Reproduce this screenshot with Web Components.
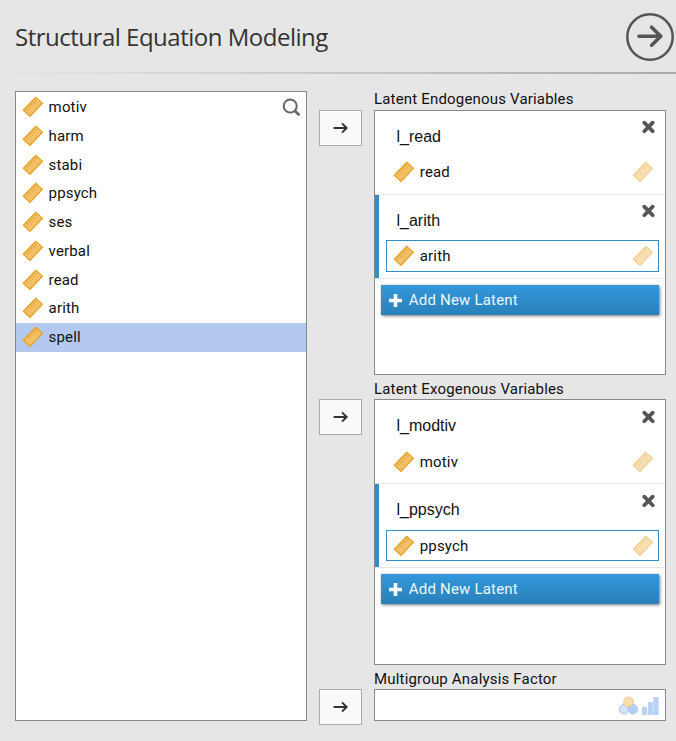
<!DOCTYPE html>
<html lang="en"><head><meta charset="utf-8"><title>Structural Equation Modeling</title>
<style>
html,body{margin:0;height:100%;background:#e6e6e6;overflow:hidden}
body{font:15px/18px Roboto,sans-serif;letter-spacing:.15px;color:#111}
</style></head><body><sem-panel></sem-panel>
<script>
const define=(name,html)=>{
  const t=document.createElement('template');t.innerHTML=html;
  customElements.define(name,class extends HTMLElement{
    constructor(){super();this.attachShadow({mode:'open'}).append(t.content.cloneNode(true));}
  });
};
define('ruler-icon',`<style>:host{display:block;width:22px;height:22px;flex:none}:host([faded]){opacity:.5}svg{display:block}</style>
<svg width="22" height="22" viewBox="0 0 22 22"><path d="M1.3 14.2 13.7 1.3 20.5 7.2 8 20.5Z" fill="#f2bf66" stroke="#e59f1d" stroke-width="1.1"/><path d="m4.4 12 1.7 1.7m.3-3.8 2.3 2.3m-.2-4.4 1.7 1.7m.3-3.8 2.3 2.3m-.2-4.4 1.7 1.7" stroke="#d8951c" stroke-width=".9" fill="none"/></svg>`);
define('close-icon',`<style>:host{display:block;width:14px;height:14px}svg{display:block}</style>
<svg width="14" height="14" viewBox="0 0 14 14"><path d="m2.3 2.6 8.4 8.6m0-8.6-8.4 8.6" stroke="#555" stroke-width="3.7" stroke-linecap="round"/></svg>`);
define('search-icon',`<style>:host{display:block}svg{display:block}</style>
<svg width="20" height="20" viewBox="0 0 20 20" fill="none" stroke="#666"><circle cx="8.2" cy="8" r="6.5" stroke-width="2"/><path d="m12.8 12.8 4.6 4.4" stroke-width="2.8"/></svg>`);
define('run-button',`<style>:host{display:block}svg{display:block}</style>
<svg width="48" height="48" viewBox="0 0 48 48" fill="none" stroke="#555"><circle cx="24" cy="24" r="22.7" stroke-width="2.5"/><path d="M13 23.2H34.8M25.6 14.2l9.2 9-9.2 9" stroke-width="3.6" stroke-linecap="round" stroke-linejoin="round"/></svg>`);
define('assign-button',`<style>:host{display:flex;box-sizing:border-box;width:43px;height:36px;border:1px solid #aaa;background:#fafafa;align-items:center;justify-content:center}</style>
<svg width="16" height="12" viewBox="0 0 16 12" fill="none" stroke="#333" stroke-width="1.9"><path d="M.6 6h13M9 1.4 13.7 6 9 10.6"/></svg>`);
define('nominal-icon',`<style>:host{display:block}svg{display:block}</style>
<svg width="21" height="19" viewBox="0 0 21 19"><circle cx="6" cy="13.2" r="4.8" fill="#d4e2f9" stroke="#a9c7f1"/><circle cx="14.8" cy="13.2" r="4.8" fill="#b3cef5" stroke="#a9c7f1"/><circle cx="10.5" cy="5.8" r="4.9" fill="#f8dcaa" stroke="#e9c98e"/></svg>`);
define('ordinal-icon',`<style>:host{display:block}svg{display:block}</style>
<svg width="17" height="18" viewBox="0 0 17 18" fill="#b9d1f5" stroke="#a9c7f1" stroke-width=".6"><path d="M.3 10.3h4.4v7.4H.3zM6.3 5.3h4.4v12.4H6.3zM11.8.3h4.4v17.4h-4.4z"/></svg>`);
define('variable-item',`<style>:host{display:flex;height:28.75px;align-items:center;padding-left:6px;gap:4.6px}:host([selected]){background:#b4c9ef}</style>
<ruler-icon></ruler-icon><span><slot></slot></span>`);
define('variable-list',`<style>:host{display:block;box-sizing:border-box;width:292px;height:630px;border:1px solid #888;background:#fff;padding-top:.8px;position:relative}search-icon{position:absolute;right:4px;top:6px}</style>
<slot></slot><search-icon></search-icon>`);
define('latent-group',`<style>:host{display:block;box-sizing:border-box;height:84px;border-bottom:1px solid #e6e6e6;padding:0 6px 0 11px;background:#fff}
:host([active]){background:linear-gradient(#328cc8,#328cc8) left/4px 100% no-repeat #fff}
.head{display:flex;justify-content:space-between;height:var(--head,45px);padding:0 3px 0 10.5px}
.name{font:16px/18px "Liberation Sans",Arial,sans-serif;letter-spacing:0;padding-top:17px}close-icon{margin-top:var(--close,9px)}
.slot{display:flex;box-sizing:border-box;height:var(--slot,32px);border:1px solid transparent;align-items:center;padding:0 4.5px 0 5.5px;gap:5.3px}
:host([active]) .slot{border-color:#328cc8}
.slot span{flex:1}</style>
<div class="head"><span class="name"><slot name="name"></slot></span><close-icon></close-icon></div>
<div class="slot"><ruler-icon></ruler-icon><span><slot></slot></span><ruler-icon faded></ruler-icon></div>`);
define('add-latent',`<style>:host{display:flex;align-items:center;height:30px;margin:6px 6px 0;background:linear-gradient(#3498db,#2980b9);box-shadow:1px 1px 3px #0008;color:#eef6fc;padding-left:6.5px;box-sizing:border-box;gap:6.3px;letter-spacing:.2px}</style>
<svg width="15" height="15" viewBox="0 0 15 15"><path d="M7.5 1v13M1 7.5h13" stroke="#fff" stroke-width="3.6"/></svg><span><slot></slot></span>`);
define('target-box',`<style>:host{display:flex;gap:12px;align-items:start}assign-button{margin-top:19px}.label{height:19px;line-height:var(--label,17px);white-space:nowrap;letter-spacing:.18px}.col{width:292px}.box{box-sizing:border-box;height:var(--box);border:1px solid #888;background:#fff}</style>
<assign-button></assign-button><div class="col"><div class="label"><slot name="label"></slot></div><div class="box"><slot></slot></div></div>`);
define('factor-types',`<style>:host{display:flex;justify-content:flex-end;gap:3px;padding:6px 6px 0 0}ordinal-icon{margin-top:1px}</style><nominal-icon></nominal-icon><ordinal-icon></ordinal-icon>`);
define('panel-header',`<style>:host{display:flex;box-sizing:border-box;height:74px;justify-content:space-between;padding:13px 2px 0 15px;background:linear-gradient(90deg,#e6e6e6,#aaa) bottom/100% 2px no-repeat}
.title{font:24px/48px "Open Sans","Noto Sans",sans-serif;letter-spacing:-.49px;color:#333}</style><span class="title"><slot></slot></span><run-button></run-button>`);
define('sem-panel',`<style>:host{display:block;width:676px;height:741px}main{display:flex;gap:12px;padding:17px 0 0 15px}.targets{display:grid;grid-template-rows:289px 290px auto}target-box{--box:265px}target-box.wide{--box:266px;--label:19px;--head:46px;--slot:31px;--close:10px}target-box.small{--box:32px;--label:19px}</style>
<panel-header>Structural Equation Modeling</panel-header>
<main><variable-list>${['motiv','harm','stabi','ppsych','ses','verbal','read','arith'].map(v=>`<variable-item>${v}</variable-item>`).join('')}<variable-item selected>spell</variable-item></variable-list>
<div class="targets">
<target-box><span slot="label">Latent Endogenous Variables</span>
<latent-group><span slot="name">l_read</span>read</latent-group><latent-group active><span slot="name">l_arith</span>arith</latent-group><add-latent>Add New Latent</add-latent></target-box>
<target-box class="wide"><span slot="label">Latent Exogenous Variables</span>
<latent-group><span slot="name">l_modtiv</span>motiv</latent-group><latent-group active><span slot="name">l_ppsych</span>ppsych</latent-group><add-latent>Add New Latent</add-latent></target-box>
<target-box class="small"><span slot="label">Multigroup Analysis Factor</span><factor-types></factor-types></target-box>
</div></main>`);
</script></body></html>
